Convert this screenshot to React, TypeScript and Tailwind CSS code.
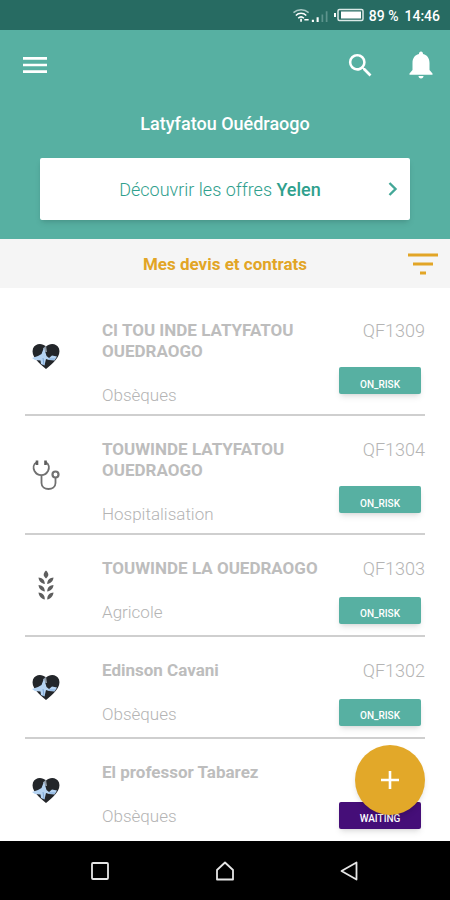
import React from "react";
import { MdMenu, MdSearch } from "react-icons/md";

type IconKind = "heart" | "stethoscope" | "wheat";

interface Contract {
  name: string;
  product: string;
  code: string;
  status: "ON_RISK" | "WAITING";
  icon: IconKind;
}

const contracts: Contract[] = [
  { name: "CI TOU INDE LATYFATOU OUEDRAOGO", product: "Obsèques", code: "QF1309", status: "ON_RISK", icon: "heart" },
  { name: "TOUWINDE LATYFATOU OUEDRAOGO", product: "Hospitalisation", code: "QF1304", status: "ON_RISK", icon: "stethoscope" },
  { name: "TOUWINDE LA OUEDRAOGO", product: "Agricole", code: "QF1303", status: "ON_RISK", icon: "wheat" },
  { name: "Edinson Cavani", product: "Obsèques", code: "QF1302", status: "ON_RISK", icon: "heart" },
  { name: "El professor Tabarez", product: "Obsèques", code: "", status: "WAITING", icon: "heart" },
];

function HeartIcon() {
  return (
    <svg width="30" height="28" viewBox="0 0 30 28" aria-hidden="true">
      <path
        d="M15 27C12 24.500 8 21.500 5 17.500C2 14 0.800 10 2 6.500C4 1.200 11 0.500 15 4.500C19 0.500 26 1.200 28 6.500C29.200 10 28 14 25 17.500C22 21.500 18 24.500 15 27Z"
        fill="#23262a"
      />
      <path d="M12 6.500L15 3.500L16 10L14.500 10Z" fill="#8f9aa5" />
      <path
        d="M1 16L7 14L10.500 12L13 5.500L15.500 14L18 16L21 13.500L26 14.500L23.500 18.500L18 18L15 17L13.500 23.500L10 22L9.500 18.500L4 18Z"
        fill="#b5d3f2"
      />
      <path d="M13 23L12 16M18 17L24 17" stroke="#7fa9d8" strokeWidth="1" fill="none" />
    </svg>
  );
}

function StethoscopeIcon() {
  return (
    <svg width="30" height="32" viewBox="0 0 30 32" fill="none" stroke="#707070" strokeWidth="1.800" aria-hidden="true">
      <path d="M6 3C2 5 2 9 3.500 12C6.500 17.500 14 17.500 17 12C18.500 9 18.500 5 14.500 3" />
      <path d="M6 1.500V6M14.500 1.500V6" strokeWidth="2.600" stroke="#5c5c5c" />
      <path d="M10.500 16.500V24C10.500 32 24.500 32 24.500 24V18.500" />
      <circle cx="24.500" cy="15.500" r="3" strokeWidth="2.200" />
    </svg>
  );
}

function WheatIcon() {
  return (
    <svg width="18" height="30" viewBox="0 0 18 30" fill="#5e5e5e" aria-hidden="true">
      <path d="M9 0.500C12.200 3.500 12 6 9 8.500C6 6 5.800 3.500 9 0.500Z" />
      <path d="M1.500 7.500C5 7.800 7.800 9.500 7.800 14C4.500 13.500 2 11.500 1.500 7.500Z" />
      <path d="M16.500 7.500C13 7.800 10.200 9.500 10.200 14C13.500 13.500 16 11.500 16.500 7.500Z" />
      <path d="M1.500 15C5 15.300 7.800 17 7.800 21.500C4.500 21 2 19 1.500 15Z" />
      <path d="M16.500 15C13 15.300 10.200 17 10.200 21.500C13.500 21 16 19 16.500 15Z" />
      <path d="M1.500 22.500C5 22.800 7.800 24.500 7.800 29.500C4.500 29 2 26.500 1.500 22.500Z" />
      <path d="M16.500 22.500C13 22.800 10.200 24.500 10.200 29.500C13.500 29 16 26.500 16.500 22.500Z" />
    </svg>
  );
}

function ContractIcon({ kind }: { kind: IconKind }) {
  if (kind === "stethoscope") return <StethoscopeIcon />;
  if (kind === "wheat") return <WheatIcon />;
  return <HeartIcon />;
}

function StatusBar() {
  return (
    <div className="flex h-[30px] items-center justify-end bg-[#276b62] pr-[10px] text-sm text-white">
      <svg width="36" height="18" viewBox="0 0 38 18" fill="none" aria-hidden="true" className="mr-[5px]">
        <path d="M0.500 6.500C5 2.500 12 2.500 16.500 6.500" stroke="#a9c8c4" strokeWidth="1.500" />
        <path d="M3 9.500C6 6.500 11 6.500 14 9.500" stroke="#fff" strokeWidth="1.600" />
        <path d="M5.500 12.500C7.500 10.500 9.500 10.500 11.500 12.500" stroke="#fff" strokeWidth="1.600" />
        <path d="M8.500 13V16M12 14H16.500" stroke="#fff" strokeWidth="1.800" />
        <path d="M21 14V16.500M26 11.500V16.500" stroke="#fff" strokeWidth="2.200" />
        <path d="M31 8.500V16.500M35.500 5V16.500" stroke="#5d948d" strokeWidth="1.800" />
      </svg>
      <svg width="30" height="14" viewBox="0 0 30 14" fill="none" aria-hidden="true" className="mr-[5px]">
        <path d="M1 5V9" stroke="#fff" strokeWidth="2" />
        <rect x="4" y="1.500" width="25" height="11" rx="1.500" stroke="#dbe9e7" strokeWidth="1.500" />
        <rect x="7" y="3.500" width="20" height="7" fill="#fff" />
      </svg>
      <span className="pt-[2px] font-medium">89 %</span>
      <time className="pt-[2px] pl-[6px] font-medium">14:46</time>
    </div>
  );
}

function ContractRow({ item, last }: { item: Contract; last: boolean }) {
  return (
    <li className={`flex min-h-[102px] ${last ? "" : "border-b-2 border-[#cfcfcf]"}`}>
      <div className="flex w-[42px] shrink-0 items-center justify-center">
        <ContractIcon kind={item.icon} />
      </div>
      <div className="flex min-w-0 flex-1 flex-col gap-[23px] pt-[23px] pb-2 pl-[35px] text-[17px] leading-[21px]">
        <h2 className="font-bold text-[#bdbdbd]">{item.name}</h2>
        <p className="font-light text-[#b4b4b4]">{item.product}</p>
      </div>
      <div className="flex w-[98px] shrink-0 flex-col items-end pt-[23px]">
        <p className="h-[21px] text-lg leading-[21px] font-light text-[#b4b4b4]">{item.code}</p>
        <div className="flex flex-1 items-center pt-[6px] pr-1">
          <span
            className={`flex h-[27px] w-[82px] items-center justify-center rounded-xs pt-2 text-[10px] leading-3 font-medium text-white shadow-md ${
              item.status === "WAITING" ? "bg-[#450e78]" : "bg-[#57b0a2]"
            }`}
          >
            {item.status}
          </span>
        </div>
      </div>
    </li>
  );
}

export default function App() {
  return (
    <div className="flex min-h-screen flex-col bg-white font-[Roboto,sans-serif]">
      <StatusBar />
      <header className="bg-[#57b0a2] pt-[19px] pb-[19px] text-white">
        <div className="flex h-8 items-center pr-4 pl-[19px]">
          <button type="button" aria-label="Menu">
            <MdMenu size={32} />
          </button>
          <button type="button" aria-label="Rechercher" className="mr-8 ml-auto">
            <MdSearch size={31} />
          </button>
          <button type="button" aria-label="Notifications">
            <svg width="26" height="28" viewBox="0 0 26 28" fill="#fff" aria-hidden="true">
              <path d="M13 0.500C14.300 0.500 15 1.500 15 3C19.500 4 21.500 7.500 21.500 12V19L24.500 22.500V23.800H1.500V22.500L4.500 19V12C4.500 7.500 6.500 4 11 3C11 1.500 11.700 0.500 13 0.500Z" />
              <path d="M10.500 25H15.500C15.500 26.500 14.500 27.500 13 27.500C11.500 27.500 10.500 26.500 10.500 25Z" />
            </svg>
          </button>
        </div>
        <h1 className="pt-8 text-center text-lg leading-[21px] font-medium">Latyfatou Ouédraogo</h1>
        <div className="px-10 pt-6">
          <button
            type="button"
            className="flex h-[62px] w-full items-center rounded-xs bg-white pr-2 text-lg font-light text-[#2fa08d] shadow-md"
          >
            <span className="flex-1 pt-[2px] pl-[18px]">
              Découvrir les offres <b className="font-medium">Yelen</b>
            </span>
            <svg width="20" height="20" viewBox="0 0 20 20" fill="none" stroke="#43a797" strokeWidth="2.400" aria-hidden="true">
              <path d="M7.500 4L13.500 10L7.500 16" />
            </svg>
          </button>
        </div>
      </header>
      <main className="relative flex-1">
        <div className="flex h-[49px] items-center bg-[#f5f5f5] pr-3">
          <h2 className="flex-1 pt-[2px] pl-[42px] text-center text-[17px] leading-[21px] font-bold text-[#e2a526]">
            Mes devis et contrats
          </h2>
          <button type="button" aria-label="Filtrer">
            <svg width="30" height="22" viewBox="0 0 30 22" stroke="#e2a526" strokeWidth="3" aria-hidden="true">
              <path d="M0 2H30M5 11H25M12 20H18" />
            </svg>
          </button>
        </div>
        <ul className="px-[25px] pt-[9px]">
          {contracts.map((item, i) => (
            <ContractRow key={item.name} item={item} last={i === contracts.length - 1} />
          ))}
        </ul>
        <button
          type="button"
          aria-label="Ajouter"
          className="absolute right-[25px] bottom-[26px] flex size-[70px] items-center justify-center rounded-full bg-[#e2a829] shadow-md"
        >
          <svg width="18" height="18" viewBox="0 0 18 18" stroke="#fff" strokeWidth="2.600" aria-hidden="true">
            <path d="M9 0V18M0 9H18" />
          </svg>
        </button>
      </main>
      <nav className="flex h-[59px] items-center justify-center gap-[105px] bg-black">
        <button type="button" aria-label="Applications récentes">
          <svg width="20" height="20" viewBox="0 0 20 20" fill="none" stroke="#e6e6e6" strokeWidth="1.800" aria-hidden="true">
            <rect x="2" y="2" width="16" height="16" rx="1" />
          </svg>
        </button>
        <button type="button" aria-label="Accueil">
          <svg width="20" height="20" viewBox="0 0 20 20" fill="none" stroke="#e6e6e6" strokeWidth="1.800" strokeLinejoin="round" aria-hidden="true">
            <path d="M2 9L10 1.500L18 9V18.500H2Z" />
          </svg>
        </button>
        <button type="button" aria-label="Retour">
          <svg width="20" height="20" viewBox="0 0 20 20" fill="none" stroke="#e6e6e6" strokeWidth="1.800" strokeLinejoin="round" aria-hidden="true">
            <path d="M16.500 1.500V18.500L1.500 10Z" />
          </svg>
        </button>
      </nav>
    </div>
  );
}
